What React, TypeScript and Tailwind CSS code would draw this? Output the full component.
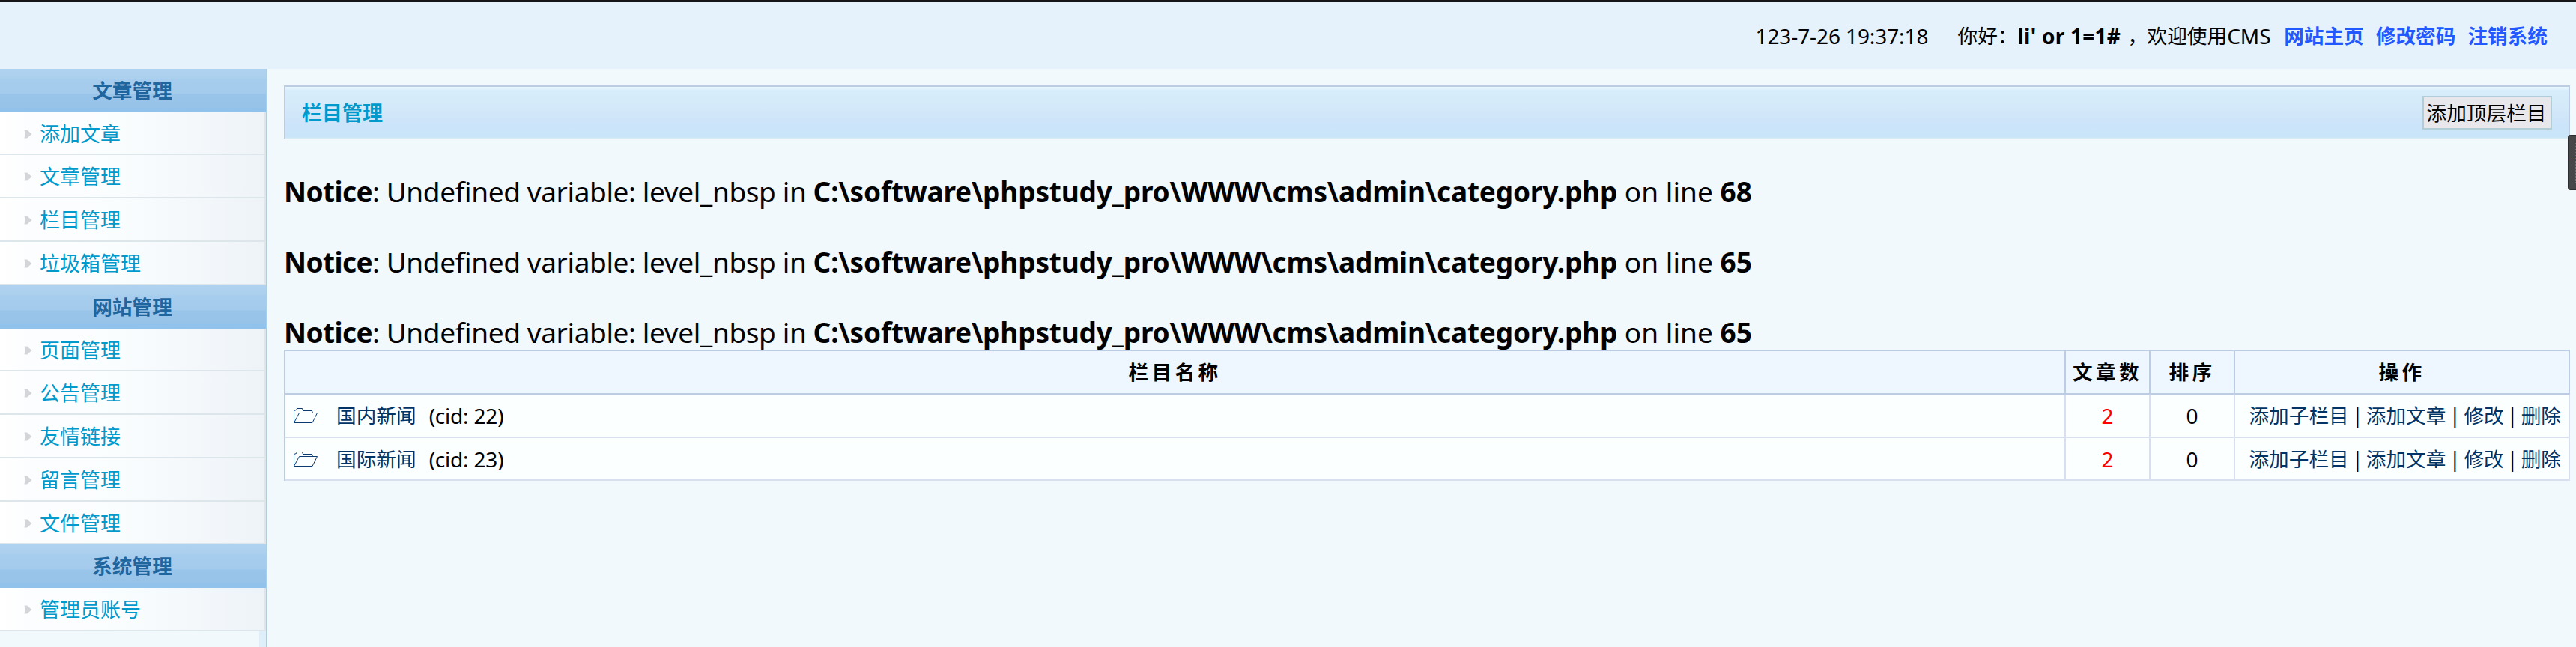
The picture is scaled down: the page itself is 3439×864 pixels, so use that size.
type MenuItem = {
  label: string
  height: string
}

type MenuGroup = {
  title: string
  items: MenuItem[]
}

const menu: MenuGroup[] = [
  {
    title: "文章管理",
    items: [
      { label: "添加文章", height: "h-[57px]" },
      { label: "文章管理", height: "h-[58px]" },
      { label: "栏目管理", height: "h-[58px]" },
      { label: "垃圾箱管理", height: "h-[58px]" },
    ],
  },
  {
    title: "网站管理",
    items: [
      { label: "页面管理", height: "h-[57px]" },
      { label: "公告管理", height: "h-[58px]" },
      { label: "友情链接", height: "h-[58px]" },
      { label: "留言管理", height: "h-[58px]" },
      { label: "文件管理", height: "h-[57px]" },
    ],
  },
  {
    title: "系统管理",
    items: [{ label: "管理员账号", height: "h-[58px]" }],
  },
]

const notices = [68, 65, 65]

const categories = [
  { name: "国内新闻", cid: 22, articles: 2, order: 0, height: "h-[58px]" },
  { name: "国际新闻", cid: 23, articles: 2, order: 0, height: "h-[57px]" },
]

const columns = "grid grid-cols-[2377px_113px_113px_447px]"

function ArrowIcon() {
  return (
    <svg className="w-[11px] h-[14px] shrink-0" viewBox="0 0 11 14">
      <path d="M0.5 1.5 L4 1.5 L10.5 7 L4 12.5 L0.5 12.5 L1.6 7 Z" fill="#d3d5d8" />
    </svg>
  )
}

function FolderIcon() {
  return (
    <svg className="w-[34px] h-[22px] shrink-0" viewBox="0 0 34 22" fill="none" stroke="#0b3a70" strokeWidth="1">
      <path d="M1.5 20.5 V4.5 L4.5 3.5 L5.5 1.5 H12.5 L13.5 4.5 H25.5 L26.5 7.5" />
      <path d="M1.5 20.5 L8.5 7.5 H32.5 L26 20.5 Z" />
    </svg>
  )
}

function TopBar() {
  return (
    <div className="h-[92px] border-t-[3px] border-[#17171a] bg-[#e5f2fb] pr-[38px] flex justify-end items-center leading-[36px]">
      <span className="w-[270px] text-[28px] tracking-[-0.1px]">123-7-26 19:37:18</span>
      <span className="w-[80px]">你好：</span>
      <span className="w-[147px] text-[28px] font-bold tracking-[0.25px]">li' or 1=1#</span>
      <span className="w-[26px]">，</span>
      <span>欢迎使用</span>
      <span className="w-[76px] text-[28px]">CMS</span>
      <span className="flex gap-[16px] font-bold text-[#2158ff]">
        <a>网站主页</a>
        <a>修改密码</a>
        <a>注销系统</a>
      </span>
    </div>
  )
}

function Sidebar() {
  return (
    <div className="w-[357px] shrink-0 border-r-2 border-[#b1cdd8] flex flex-col">
      {menu.map((group) => (
        <div key={group.title}>
          <div className="h-[58px] pr-[2px] flex items-center justify-center font-bold text-[#1f659e] bg-[linear-gradient(180deg,#afd2f0_0%,#abd0ee_22%,#a6cdee_24%,#a5cbec_57%,#9ac5ea_58%,#98c3e9_88%,#90c2ec_90%)]">
            {group.title}
          </div>
          {group.items.map((item) => (
            <div
              key={item.label}
              className={`${item.height} pt-[2px] pl-[32px] flex items-center gap-[10px] border-b-2 border-r-2 border-[#dde6ea] text-[#0099cc] bg-[linear-gradient(90deg,#ffffff_0%,#fcfdff_12%,#fafdfe_45%,#eef3f8_100%)]`}
            >
              <ArrowIcon />
              <a className="text-[27px]">{item.label}</a>
            </div>
          ))}
        </div>
      ))}
      <div className="grow border-r-[9px] border-[#deeffa]" />
    </div>
  )
}

function Notice({ line }: { line: number }) {
  return (
    <div className="pt-[47px] h-[94px] text-[37px] leading-[47px] whitespace-nowrap">
      <b className="tracking-[-0.6px]">Notice</b>
      <span className="tracking-[-0.38px]">: Undefined variable: level_nbsp in </span>
      <b className="tracking-[-0.18px]">C:\software\phpstudy_pro\WWW\cms\admin\category.php</b>
      <span className="tracking-[0.05px]"> on line </span>
      <b className="tracking-[0px]">{line}</b>
    </div>
  )
}

function CategoryTable() {
  return (
    <div className="border-l-2 border-t-2 border-[#bccde3]">
      <div className={`${columns} h-[58px] font-bold tracking-[4.4px]`}>
        {["栏目名称", "文章数", "排序", "操作"].map((title) => (
          <div key={title} className="flex items-center justify-center bg-[#eef6ff] border-r-2 border-b-2 border-[#bccde3]">
            {title}
          </div>
        ))}
      </div>
      {categories.map((row) => (
        <div key={row.cid} className={`${columns} ${row.height} text-[#003366]`}>
          <div className="pl-[10px] flex items-center bg-[#fbffff] border-r-2 border-b-2 border-[#d8e0f0]">
            <FolderIcon />
            <a className="ml-[24px]">{row.name}</a>
            <span className="ml-[17px] text-[28px] tracking-[-0.2px] text-black">(cid: {row.cid})</span>
          </div>
          <div className="flex items-center justify-center bg-[#fbffff] border-r-2 border-b-2 border-[#d8e0f0] text-[28px] text-[#ff0000]">
            {row.articles}
          </div>
          <div className="flex items-center justify-center bg-[#fbffff] border-r-2 border-b-2 border-[#d8e0f0] text-[28px] text-black">
            {row.order}
          </div>
          <div className="pr-[10px] flex items-center justify-end bg-[#fbffff] border-r-2 border-b-2 border-[#d8e0f0]">
            <a>添加子栏目</a>
            <span className="w-[23px] text-center text-black">|</span>
            <a>添加文章</a>
            <span className="w-[24px] text-center text-black">|</span>
            <a>修改</a>
            <span className="w-[23px] text-center text-black">|</span>
            <a>删除</a>
          </div>
        </div>
      ))}
    </div>
  )
}

export default function App() {
  return (
    <div className="relative w-[3439px] h-[864px] overflow-hidden flex flex-col bg-[#f1f9fd] text-black text-[26.67px] leading-[36px] font-['Noto_Sans','Noto_Sans_CJK_SC',sans-serif]">
      <TopBar />
      <div className="flex grow">
        <Sidebar />
        <div className="pl-[22px] pr-[8px] pt-[22px] grow">
          <div className="h-[71px] pl-[22px] pr-[22px] flex items-center justify-between border-t-2 border-x-2 border-[#bccde3] bg-[linear-gradient(180deg,#ebf6ff_0px,#d7edfb_5px,#d4e9f9_28px,#cce4f9_50px,#c9e5f8_67px,#d8edf8_69px)]">
            <h2 className="font-bold text-[27px] text-[#0099cc]">栏目管理</h2>
            <button className="w-[173px] h-[45px] pr-[2px] pt-px border-2 border-[#b1cdd8] bg-[#e7e7ec] leading-[36px] whitespace-nowrap">添加顶层栏目</button>
          </div>
          {notices.map((line, i) => (
            <Notice key={i} line={line} />
          ))}
          <CategoryTable />
        </div>
      </div>
      {/* Floating page ruler */}
      <div className="absolute right-0 top-[180px] w-[11px] h-[74px] rounded-l-[4px] border border-r-0 border-[#2c2d2f] bg-[#464749]">
        <div className="absolute right-0 top-[8px] w-[2px] h-[56px] bg-[repeating-linear-gradient(180deg,#6f7072_0px,#6f7072_1px,#464749_1px,#464749_2px)]" />
        <div className="absolute right-0 top-[32px] w-[2px] h-px bg-[#e0a030]" />
      </div>
    </div>
  )
}
